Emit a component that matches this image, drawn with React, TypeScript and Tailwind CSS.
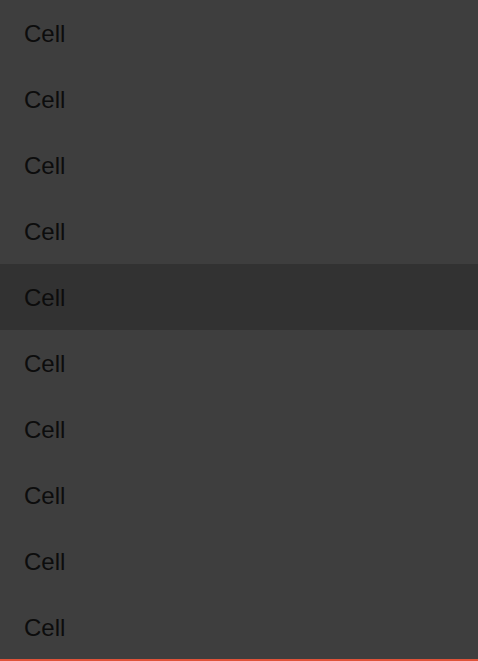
export default function App() {
  const rows = Array.from({ length: 10 }, (_, i) => i)

  return (
    <div className="w-[478px] h-[661px] bg-[#3e3e3e] flex flex-col overflow-hidden" style={{ fontFamily: '"Liberation Sans", Arial, sans-serif' }}>
      <div className="flex flex-col flex-1">
        {rows.map((i) => (
          <div
            key={i}
            className={`h-[66px] shrink-0 flex items-center pl-6 pt-[2px] text-[24px] text-[#0c0c0c] ${i === 4 ? "bg-[#323232]" : ""}`}
          >
            Cell
          </div>
        ))}
      </div>
      <div className="h-[2px] -mt-[1px] bg-[#e0533a]" />
    </div>
  )
}
